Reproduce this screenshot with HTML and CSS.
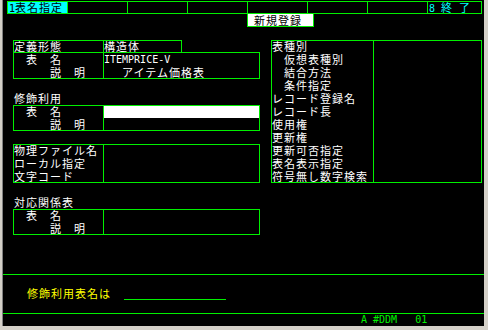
FILE: index.html
```html
<!DOCTYPE html>
<html lang="ja">

<head>
    <meta charset="utf-8">
    <title>表名指定</title>
    <link rel="stylesheet" href="styles.css">
</head>

<body>
    <div class="frame">
        <div class="screen">
            <!-- ファンクションキー -->
            <div class="fkeys">
                <div class="fkey fkey-on"><span class="an">1</span>表名指定</div>
                <div class="fkey"></div>
                <div class="fkey"></div>
                <div class="fkey"></div>
                <div class="fkey"></div>
                <div class="fkey"></div>
                <div class="fkey"></div>
                <div class="fkey fkey-last"><span class="an">8 </span>終<span class="an"> </span>了</div>
            </div>
            <div class="mode">新規登録</div>

            <!-- 定義形態 -->
            <div class="box box-kind">
                <div class="cell">定義形態</div>
                <div class="cell sep">構造体</div>
            </div>
            <div class="box box-table">
                <div class="cell">
                    <div class="ln ind-name">表　名</div>
                    <div class="ln ind-desc">説　明</div>
                </div>
                <div class="cell sep">
                    <div class="ln an">ITEMPRICE-V</div>
                    <div class="ln ind-val">アイテム価格表</div>
                </div>
            </div>

            <!-- 修飾利用 -->
            <div class="title title-mod">修飾利用</div>
            <div class="box box-mod">
                <div class="cell">
                    <div class="ln ind-name">表　名</div>
                    <div class="ln ind-desc">説　明</div>
                </div>
                <div class="cell sep">
                    <div class="input"></div>
                </div>
            </div>

            <!-- 物理ファイル -->
            <div class="box box-file">
                <div class="cell">
                    <div class="ln">物理ファイル名</div>
                    <div class="ln">ローカル指定</div>
                    <div class="ln">文字コード</div>
                </div>
                <div class="cell sep"></div>
            </div>

            <!-- 対応関係表 -->
            <div class="title title-rel">対応関係表</div>
            <div class="box box-rel">
                <div class="cell">
                    <div class="ln ind-name">表　名</div>
                    <div class="ln ind-desc">説　明</div>
                </div>
                <div class="cell sep"></div>
            </div>

            <!-- 表属性 -->
            <div class="box box-attr">
                <div class="cell">
                    <div class="ln">表種別</div>
                    <div class="ln ind-sub">仮想表種別</div>
                    <div class="ln ind-sub">結合方法</div>
                    <div class="ln ind-sub">条件指定</div>
                    <div class="ln">レコード登録名</div>
                    <div class="ln">レコード長</div>
                    <div class="ln">使用権</div>
                    <div class="ln">更新権</div>
                    <div class="ln">更新可否指定</div>
                    <div class="ln">表名表示指定</div>
                    <div class="ln">符号無し数字検索</div>
                </div>
                <div class="cell sep"></div>
            </div>

            <!-- メッセージ行 -->
            <div class="rule rule-top"></div>
            <div class="prompt">修飾利用表名は</div>
            <div class="entry"></div>
            <div class="rule rule-bottom"></div>
            <div class="status an">A #DDM   01</div>
        </div>
    </div>
</body>

</html>
```

FILE: styles.css
```css
html,
body {
    margin: 0;
    background: #d4d0c8;
}

.frame {
    width: 488px;
    height: 330px;
    box-sizing: border-box;
    padding: 0 4px 4px 3px;
    background: #d4d0c8;
}

/* 80桁 x 25行の端末画面 (1桁 6px, 1行 13px) */
.screen {
    height: 326px;
    box-sizing: border-box;
    padding-top: 1px;
    background: #000;
    box-shadow: -1px 0 0 #808080;
    display: grid;
    grid-template-columns: 4px repeat(79, 6px) 3px;
    grid-template-rows: repeat(25, 13px);
    color: #fff;
    font-family: "Noto Sans CJK JP", sans-serif;
    font-size: 11px;
    letter-spacing: 1px;
    line-height: 13px;
}

.an {
    font-family: "DejaVu Sans Mono", monospace;
    font-size: 10px;
    letter-spacing: 0;
    white-space: pre;
}

/* ファンクションキー */
.fkeys {
    grid-row: 1;
    grid-column: 2 / 81;
    margin-right: -1px;
    display: flex;
}

.fkey {
    width: 60px;
    box-sizing: border-box;
    border: 1px solid #00f000;
    border-right: 0;
    line-height: 11px;
    padding-left: 1px;
    color: #00ffff;
    white-space: nowrap;
}

.fkey-on {
    background: #00ffff;
    color: #000;
}

.fkey-last {
    flex: 1;
    border-right: 1px solid #00f000;
}

.mode {
    grid-row: 2;
    grid-column: 42 / 53;
    margin: -1px -1px 0 0;
    padding: 1px 0 0 7px;
    background: #fff;
    color: #000;
    box-shadow: inset 0 0 0 1px #00f000;
}

/* 枠 */
.box {
    display: grid;
    grid-template-columns: 90px 1fr;
    margin-right: -1px;
    box-shadow: inset 0 0 0 1px #00f000;
}

.cell {
    padding-left: 1px;
    white-space: nowrap;
}

.sep {
    box-shadow: inset 1px 0 0 #00f000;
}

.ln {
    height: 13px;
}

.ind-name {
    padding-left: 12px;
}

.ind-desc {
    padding-left: 36px;
}

.ind-val {
    padding-left: 18px;
}

.ind-sub {
    padding-left: 12px;
}

.box-kind {
    grid-row: 4;
    grid-column: 3 / 31;
}

.box-table {
    grid-row: 5 / 7;
    grid-column: 3 / 44;
    margin-top: -1px;
    padding-top: 1px;
}

.title {
    grid-column: 3 / 20;
    padding-left: 1px;
}

.title-mod {
    grid-row: 8;
}

.box-mod {
    grid-row: 9 / 11;
    grid-column: 3 / 44;
}

.input {
    height: 12px;
    margin: 1px 1px 0 0;
    background: #fff;
}

.box-file {
    grid-row: 12 / 15;
    grid-column: 3 / 44;
}

.title-rel {
    grid-row: 16;
}

.box-rel {
    grid-row: 17 / 19;
    grid-column: 3 / 44;
}

.box-attr {
    grid-row: 4 / 15;
    grid-column: 46 / 81;
    grid-template-columns: 102px 1fr;
}

/* メッセージ行 */
.rule {
    grid-column: 1 / -1;
    border-top: 1px solid #00f000;
}

.rule-top {
    grid-row: 22;
}

.rule-bottom {
    grid-row: 25;
}

.prompt {
    grid-row: 23;
    grid-column: 5 / 21;
    padding-left: 2px;
    color: #ffff00;
    white-space: nowrap;
}

.entry {
    grid-row: 23;
    grid-column: 22 / 39;
    margin: 0 3px 0 -3px;
    border-bottom: 1px solid #00f000;
}

.status {
    grid-row: 25;
    grid-column: 61 / 75;
    color: #00f000;
}
```
